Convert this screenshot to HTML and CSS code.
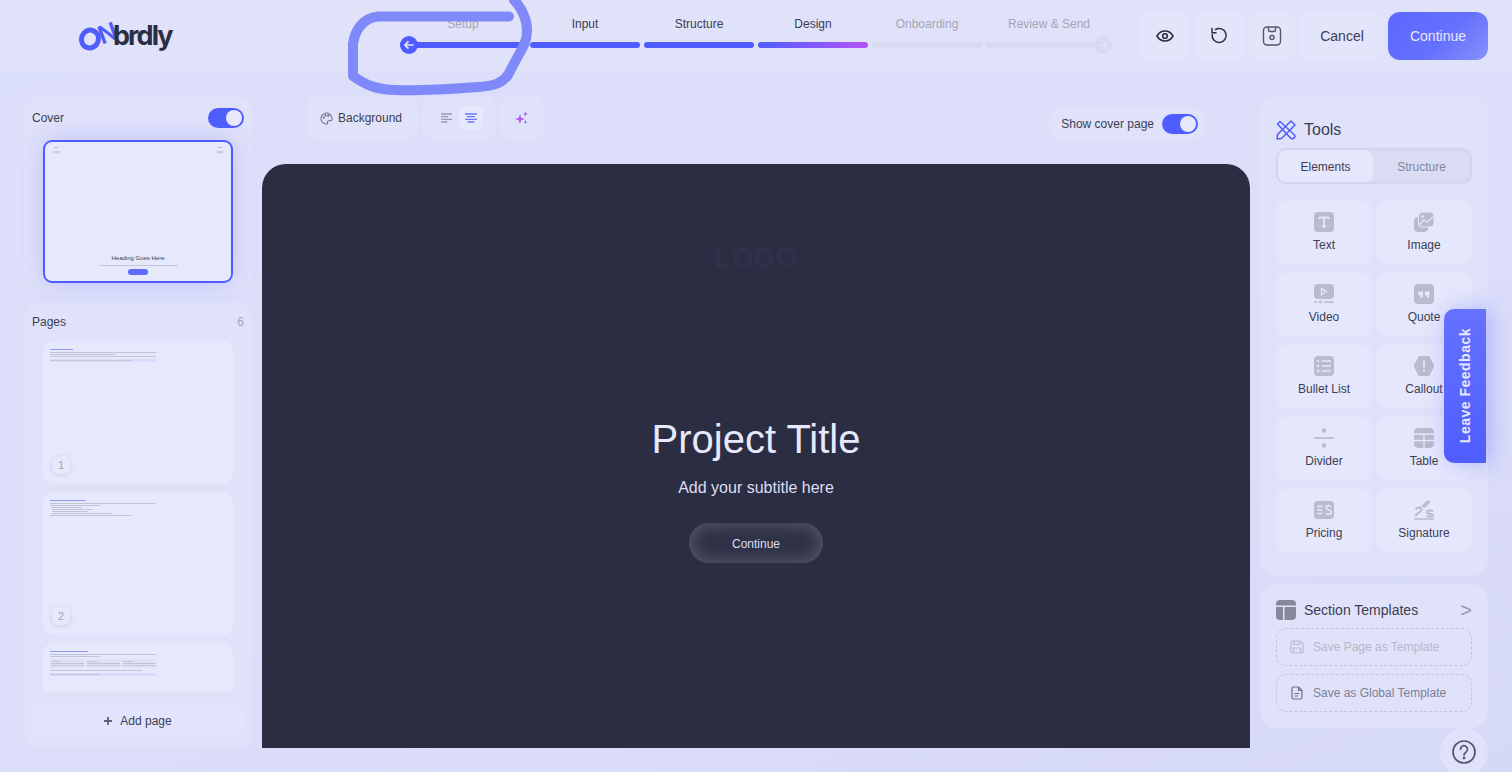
FILE: index.html
```html
<!DOCTYPE html>
<html lang="en">
<head>
  <meta charset="UTF-8">
  <title>Onbrdly - Design</title>
  <link rel="stylesheet" href="styles.css">
</head>
<body>
  <!-- Header -->
  <header class="header">
    <a class="logo" href="#">
      <svg class="logo-o" width="26" height="26" viewBox="0 0 26 26"><ellipse cx="13" cy="13" rx="8.500" ry="9" fill="none" stroke="#4f5dff" stroke-width="5" transform="rotate(20 13 13)"/></svg>
      <span class="logo-n">N</span>
      <span class="logo-text">brdly</span>
    </a>
    <div class="stepper">
      <div class="step step-end">
        <span class="step-label muted">Setup</span>
        <span class="step-bar done"></span>
        <span class="step-dot dot-back">
          <svg width="12" height="12" viewBox="0 0 12 12"><path d="M10.500 6H2M5.500 2.300 1.800 6l3.700 3.700" fill="none" stroke="#e6e8fc" stroke-width="1.700" stroke-linejoin="round"/></svg>
        </span>
      </div>
      <div class="step"><span class="step-label">Input</span><span class="step-bar done"></span></div>
      <div class="step"><span class="step-label">Structure</span><span class="step-bar done"></span></div>
      <div class="step"><span class="step-label">Design</span><span class="step-bar current"></span></div>
      <div class="step"><span class="step-label muted">Onboarding</span><span class="step-bar"></span></div>
      <div class="step step-end">
        <span class="step-label muted">Review &amp; Send</span>
        <span class="step-bar"></span>
        <span class="step-dot dot-next">
          <svg width="12" height="12" viewBox="0 0 12 12"><path d="M1.500 6H10M6.500 2.300 10.200 6 6.500 9.700" fill="none" stroke="#e2e4fa" stroke-width="1.400" stroke-linejoin="round"/></svg>
        </span>
      </div>
    </div>
    <div class="actions">
      <button class="btn-icon">
        <svg width="20" height="20" viewBox="0 0 20 20" fill="none" stroke="#2b2d42" stroke-width="1.600"><path d="M2 10C4 6.400 6.800 5 10 5S16 6.400 18 10C16 13.600 13.200 15 10 15S4 13.600 2 10Z"/><circle cx="10" cy="10" r="2.300"/></svg>
      </button>
      <button class="btn-icon">
        <svg width="20" height="20" viewBox="0 0 20 20" fill="none" stroke="#2b2d42" stroke-width="1.500" stroke-linecap="round" stroke-linejoin="round"><path d="M6.500 3.500A7 7 0 1 1 3.200 8.500"/><path d="M3 2.500V6.700H7"/></svg>
      </button>
      <button class="btn-icon btn-save">
        <svg width="20" height="20" viewBox="0 0 20 20" fill="none" stroke="#55576c" stroke-width="1.400"><rect x="1.500" y="1" width="17" height="18" rx="3.500"/><path d="M6.500 1V4a1.500 1.500 0 0 0 1.500 1.500H12A1.500 1.500 0 0 0 13.500 4V1"/><circle cx="10" cy="11.500" r="2"/></svg>
      </button>
      <button class="btn-cancel">Cancel</button>
      <button class="btn-continue">Continue</button>
    </div>
    <svg class="scribble" width="200" height="110" viewBox="340 0 200 110">
      <path d="M509 16.500H378C363 18 355 30 353 44V76C364 84 376 90 396 90C420 91 450 89 478 87C496 86 503 82 508 75L518 56C524 46 527 40 527 30C527 20 522 8 514 0" fill="none" stroke="#8089fa" stroke-width="10" stroke-linecap="round" stroke-linejoin="round"/>
    </svg>
  </header>

  <main class="main">
    <!-- Left column -->
    <aside class="col-left">
      <section class="panel cover-panel">
        <div class="panel-row">
          <span>Cover</span>
          <span class="toggle"></span>
        </div>
        <div class="cover-thumb">
          <div class="cover-logos">
            <div class="cover-logo"><i></i><span>Logo</span></div>
            <div class="cover-logo"><i></i><span>Logo</span></div>
          </div>
          <div class="cover-heading">Heading Goes Here</div>
          <div class="cover-line"></div>
          <div class="cover-btn"></div>
        </div>
      </section>

      <section class="panel pages-panel">
        <div class="panel-row">
          <span>Pages</span>
          <span class="count">6</span>
        </div>
        <div class="page-list">
          <div class="page-thumb">
            <div class="bar bar-title w-23"></div>
            <div class="bar w-106"></div>
            <div class="bar w-65"></div>
            <div class="bar w-106"></div>
            <div class="bar-note"><div class="bar w-82"></div></div>
            <span class="page-num">1</span>
          </div>
          <div class="page-thumb">
            <div class="bar bar-title w-36"></div>
            <div class="bar w-106"></div>
            <div class="bar w-50"></div>
            <div class="bar bar-indent w-30"></div>
            <div class="bar bar-indent w-40"></div>
            <div class="bar bar-indent w-36"></div>
            <div class="bar bar-indent w-60"></div>
            <div class="bar w-82"></div>
            <span class="page-num">2</span>
          </div>
          <div class="page-thumb">
            <div class="bar bar-title w-38"></div>
            <div class="bar w-106"></div>
            <div class="bar w-50"></div>
            <div class="mini-cols">
              <div class="mini-col"><div class="bar w-10"></div><div class="bar"></div><div class="bar"></div></div>
              <div class="mini-col"><div class="bar w-10"></div><div class="bar"></div><div class="bar"></div></div>
              <div class="mini-col"><div class="bar w-10"></div><div class="bar"></div><div class="bar"></div></div>
            </div>
            <div class="bar w-92"></div>
            <div class="bar-note"><div class="bar w-50"></div></div>
          </div>
        </div>
        <button class="add-page">
          <svg width="10" height="10" viewBox="0 0 10 10"><path d="M5 1v8M1 5h8" stroke="#5f6176" stroke-width="1.800"/></svg>
          Add page
        </button>
      </section>
    </aside>

    <!-- Canvas -->
    <section class="col-center">
      <div class="toolbar">
        <div class="toolbar-left">
          <button class="tool-btn tool-bg">
            <svg width="13" height="13" viewBox="0 0 14 14" fill="none" stroke="#6e7084" stroke-width="1.100"><path d="M7 1a6 6 0 1 0 0 12c1.200 0 1.500-.8 1.200-1.600-.4-1 .2-1.900 1.300-1.900H11.500C12.500 9.500 13 8.600 13 7.300 13 3.700 10.300 1 7 1Z"/><circle cx="4" cy="6" r=".7"/><circle cx="6" cy="3.800" r=".7"/><circle cx="9" cy="4" r=".7"/></svg>
            Background
          </button>
          <div class="tool-btn tool-align">
            <span class="align-opt">
              <svg width="12" height="10" viewBox="0 0 12 10" stroke="#9a9cb0" stroke-width="1.300"><path d="M0 1h11M0 3.700h7M0 6.300h11M0 9h6.500"/></svg>
            </span>
            <span class="align-opt active">
              <svg width="12" height="10" viewBox="0 0 12 10" stroke="#6f78fa" stroke-width="1.300"><path d="M0 1h12M2 3.700h8M0 6.300h12M2.500 9h7"/></svg>
            </span>
          </div>
          <button class="tool-btn tool-magic">
            <svg width="14" height="14" viewBox="0 0 14 14" fill="#b75bf2"><path d="M5 3 6.300 6.700 10 8 6.300 9.300 5 13 3.700 9.300 0 8 3.700 6.700Z"/><path d="M10.500 .5l.7 1.800 1.800.7-1.800.7-.7 1.800-.7-1.800L8 3l1.800-.7Z" fill="#9a6bf7"/><path d="M10.500 9l.6 1.400 1.400.6-1.400.6-.6 1.400-.6-1.400-1.400-.6 1.400-.6Z" fill="#7c6cf9"/></svg>
          </button>
        </div>
        <div class="cover-switch">
          <span>Show cover page</span>
          <span class="toggle"></span>
        </div>
      </div>
      <div class="canvas">
        <div class="canvas-logo">LOGO</div>
        <h1 class="canvas-title">Project Title</h1>
        <p class="canvas-sub">Add your subtitle here</p>
        <button class="canvas-btn">Continue</button>
      </div>
    </section>

    <!-- Right column -->
    <aside class="col-right">
      <section class="panel tools-panel">
        <div class="tools-head">
          <svg width="20" height="20" viewBox="0 0 20 20" fill="none" stroke="#4f5dff" stroke-width="1.500" stroke-linejoin="round"><path d="M15 1 19 5 5.500 18.500 1 19 1.500 14.500Z"/><path d="M1.500 4 4 1.500 18 14.500c1.500 1.500 1 3-.3 3.800-1 .6-2.300.4-3.200-.4Z"/></svg>
          <span>Tools</span>
        </div>
        <div class="tabs">
          <span class="tab active">Elements</span>
          <span class="tab">Structure</span>
        </div>
        <div class="tool-grid">
          <div class="tool-tile">
            <svg width="20" height="20" viewBox="0 0 20 20"><rect width="20" height="20" rx="4" fill="#b9bbcf"/><path d="M5.500 7V5.500h9V7M10 5.500v9M8 14.500h4" fill="none" stroke="#e6e8fc" stroke-width="1.800"/></svg>
            <span>Text</span>
          </div>
          <div class="tool-tile">
            <svg width="20" height="20" viewBox="0 0 20 20"><rect x="0" y="5" width="14" height="15" rx="4" fill="#b9bbcf"/><rect x="4.500" y="0" width="15.500" height="15" rx="4" fill="#b9bbcf" stroke="#e6e8fc"/><circle cx="8.500" cy="4.500" r="1.300" fill="#e6e8fc"/><path d="M5 13l5-5 3 2 6-5" fill="none" stroke="#e6e8fc" stroke-width="1.300"/></svg>
            <span>Image</span>
          </div>
          <div class="tool-tile">
            <svg width="20" height="20" viewBox="0 0 20 20"><rect width="20" height="15" rx="4" fill="#b9bbcf"/><path d="M7.500 4.500v6l5-3Z" fill="none" stroke="#e6e8fc" stroke-width="1.300"/><path d="M0 18h3M10 18h10" stroke="#b9bbcf" stroke-width="1.500"/><circle cx="6.500" cy="18" r="1.500" fill="#b9bbcf"/></svg>
            <span>Video</span>
          </div>
          <div class="tool-tile">
            <svg width="20" height="20" viewBox="0 0 20 20"><rect width="20" height="20" rx="4" fill="#b9bbcf"/><path d="M4.500 7.500h4.500V11c0 1.700-.9 2.800-2.400 3.300L6 13c.6-.3 1-.7 1-1.500H4.500ZM11 7.500h4.500V11c0 1.700-.9 2.800-2.400 3.300L12.500 13c.6-.3 1-.7 1-1.500H11Z" fill="#e6e8fc"/></svg>
            <span>Quote</span>
          </div>
          <div class="tool-tile">
            <svg width="20" height="20" viewBox="0 0 20 20"><rect width="20" height="20" rx="4" fill="#b9bbcf"/><path d="M7.500 5H17M7.500 10H17M7.500 15H17" stroke="#e6e8fc" stroke-width="1.500"/><circle cx="4" cy="5" r="1.300" fill="#e6e8fc"/><circle cx="4" cy="10" r="1.300" fill="#e6e8fc"/><circle cx="4" cy="15" r="1.300" fill="#e6e8fc"/></svg>
            <span>Bullet List</span>
          </div>
          <div class="tool-tile">
            <svg width="20" height="20" viewBox="0 0 20 20"><path d="M6 0h8a2 2 0 0 1 1.600.8L19.500 8a3.500 3.500 0 0 1 0 4l-3.900 7.200A2 2 0 0 1 14 20H6a2 2 0 0 1-1.600-.8L.5 12a3.500 3.500 0 0 1 0-4L4.400 .8A2 2 0 0 1 6 0Z" fill="#b9bbcf"/><path d="M10 4.500v7" stroke="#e6e8fc" stroke-width="1.800"/><circle cx="10" cy="14.500" r="1.100" fill="#e6e8fc"/></svg>
            <span>Callout</span>
          </div>
          <div class="tool-tile">
            <svg width="20" height="20" viewBox="0 0 20 20"><circle cx="10" cy="2.500" r="2.200" fill="#b9bbcf"/><path d="M0 10h20" stroke="#b9bbcf" stroke-width="1.600"/><circle cx="10" cy="17.500" r="2.200" fill="#b9bbcf"/></svg>
            <span>Divider</span>
          </div>
          <div class="tool-tile">
            <svg width="20" height="20" viewBox="0 0 20 20"><rect width="20" height="20" rx="4.500" fill="#b9bbcf"/><path d="M0 6h20M0 12.500h20M10 6v14" stroke="#e6e8fc" stroke-width="1.400"/></svg>
            <span>Table</span>
          </div>
          <div class="tool-tile">
            <svg width="20" height="20" viewBox="0 0 20 20"><rect y="1" width="20" height="18" rx="4" fill="#b9bbcf"/><path d="M3 6.500h5.500M3 10h5.500M3 13.500h5.500" stroke="#e6e8fc" stroke-width="1.500"/><path d="M17 6.800c-.7-.9-1.500-1.200-2.500-1.200-1.300 0-2.300.7-2.300 2 0 2.600 5 1.600 5 4.600 0 1.300-1.100 2.100-2.600 2.100-1.100 0-2-.4-2.700-1.200" fill="none" stroke="#e6e8fc" stroke-width="1.600"/></svg>
            <span>Pricing</span>
          </div>
          <div class="tool-tile">
            <svg width="20" height="20" viewBox="0 0 20 20" fill="none" stroke="#b9bbcf" stroke-width="2"><path d="M0 19h20" stroke-width="1.500"/><path d="M1.500 9.500c1.500-2.500 6-2.800 6 0 0 2-5 4.500-6.500 6.500"/><path d="M19 11.500c-1-1.200-6-1.500-6 .7 0 2.300 6 1.200 6 3.300 0 1.500-3.500 1.300-6.500.5"/><path d="M10 6l4-4" stroke-width="3.500" stroke-linecap="round"/></svg>
            <span>Signature</span>
          </div>
        </div>
      </section>

      <section class="panel templates-panel">
        <div class="templates-head">
          <svg width="20" height="20" viewBox="0 0 20 20"><path d="M4 0h12a4 4 0 0 1 4 4v1.500H0V4a4 4 0 0 1 4-4Z" fill="#85879b"/><path d="M0 7h7v13H4a4 4 0 0 1-4-4ZM8.500 7H20v9a4 4 0 0 1-4 4H8.500Z" fill="#85879b"/></svg>
          <span>Section Templates</span>
          <span class="chev">&gt;</span>
        </div>
        <button class="dash-btn disabled">
          <svg width="14" height="14" viewBox="0 0 14 14" fill="none" stroke="#b9bbcf" stroke-width="1.200" stroke-linejoin="round"><path d="M1 2.500A1.500 1.500 0 0 1 2.500 1H10l3 3v7.500a1.500 1.500 0 0 1-1.500 1.500h-9A1.500 1.500 0 0 1 1 11.500Z"/><path d="M4 1v3.500h5V1M3.500 13V8h7v5"/></svg>
          Save Page as Template
        </button>
        <button class="dash-btn">
          <svg width="14" height="14" viewBox="0 0 14 14" fill="none" stroke="#6e7084" stroke-width="1.200" stroke-linejoin="round"><path d="M2 2.500A1.500 1.500 0 0 1 3.500 1H8.500L12 4.500v7A1.500 1.500 0 0 1 10.500 13h-7A1.500 1.500 0 0 1 2 11.500Z"/><path d="M8.500 1v3.500H12M4.500 7.500h5M4.500 10h3.500"/></svg>
          Save as Global Template
        </button>
      </section>
    </aside>
  </main>

  <button class="feedback">Leave Feedback</button>
  <button class="help">
    <svg width="24" height="24" viewBox="0 0 24 24" fill="none" stroke="#55576c" stroke-width="1.700"><circle cx="12" cy="12" r="11"/><path d="M8.500 9.200a3.500 3.500 0 1 1 5.400 3c-1.300.8-1.900 1.400-1.900 2.800" stroke-linecap="round"/><circle cx="12" cy="18" r=".6" fill="#55576c"/></svg>
  </button>
</body>
</html>
```
FILE: styles.css
```css
/* Global Styles */
:root {
  --primary: #4f5dff;
  --dark: #2b2d42;
  --text: #3c3e54;
  --muted: #a3a5b8;
  --panel: #e0e2f9;
  --tile: #e5e7fc;
  --track: #d8daf1;
}

* {
  margin: 0;
  padding: 0;
  box-sizing: border-box;
}

html, body {
  height: 100%;
}

body {
  position: relative;
  width: 1512px;
  height: 772px;
  overflow: hidden;
  font-family: 'Liberation Sans', Arial, sans-serif;
  color: var(--text);
  background: linear-gradient(160deg, #dcdffa 0%, #dcdefa 55%, #d6d9f6 100%);
}

button {
  font-family: inherit;
  border: none;
  cursor: pointer;
  color: inherit;
}

/* Header */
.header {
  position: relative;
  display: flex;
  align-items: flex-start;
  height: 72px;
  background-color: var(--panel);
}

.logo {
  position: relative;
  display: block;
  width: 400px;
  height: 72px;
  flex-shrink: 0;
  text-decoration: none;
}

.logo-o {
  position: absolute;
  left: 77px;
  top: 26px;
}

.logo-n {
  position: absolute;
  left: 98px;
  top: 19px;
  font-family: 'Inter', sans-serif;
  font-size: 25px;
  line-height: 28px;
  font-weight: 600;
  color: var(--primary);
  transform: rotate(-20deg);
}

.logo-text {
  position: absolute;
  left: 113px;
  top: 20px;
  font-family: 'Inter', sans-serif;
  font-size: 27px;
  line-height: 32px;
  font-weight: 700;
  letter-spacing: -1.900px;
  color: var(--dark);
}

.stepper {
  display: flex;
  gap: 4px;
  margin-top: 16px;
}

.step {
  position: relative;
  display: flex;
  flex-direction: column;
  align-items: center;
  width: 110px;
  gap: 10px;
}

.step-end {
  width: 126px;
}

.step-label {
  font-size: 12px;
  line-height: 16px;
  color: var(--text);
}

.step-label.muted {
  color: var(--muted);
}

.step-bar {
  display: block;
  width: 100%;
  height: 6px;
  border-radius: 3px;
  background-color: var(--track);
}

.step-bar.done {
  background-color: var(--primary);
}

.step-bar.current {
  background: linear-gradient(90deg, var(--primary), #b455f5);
}

.step-dot {
  position: absolute;
  top: 20px;
  width: 18px;
  height: 18px;
  border-radius: 50%;
  display: flex;
  align-items: center;
  justify-content: center;
}

.dot-back {
  left: 0;
  background-color: var(--primary);
}

.dot-next {
  right: 0;
  background-color: var(--track);
}

.actions {
  display: flex;
  gap: 4px;
  margin: 12px 24px 0 auto;
}

.btn-icon,
.btn-cancel {
  height: 48px;
  border-radius: 12px;
  background-color: #e3e5fb;
  display: flex;
  align-items: center;
  justify-content: center;
}

.btn-icon {
  width: 50px;
}

.btn-save {
  width: 48px;
}

.btn-cancel {
  width: 84px;
  font-size: 14px;
  color: var(--text);
}

.btn-continue {
  width: 100px;
  height: 48px;
  border-radius: 12px;
  font-size: 14px;
  color: #e6e8fc;
  background: linear-gradient(135deg, #5c68ff 0%, #6470fd 55%, #8791fb 100%);
}

.scribble {
  position: absolute;
  left: 340px;
  top: 0;
  overflow: visible;
}

/* Layout */
.main {
  display: grid;
  grid-template-columns: 228px 988px 228px;
  column-gap: 10px;
  height: 700px;
  padding: 24px;
}

.panel {
  background-color: var(--panel);
  border-radius: 16px;
}

.panel-row {
  display: flex;
  align-items: center;
  justify-content: space-between;
  font-size: 12px;
  line-height: 20px;
}

/* Left column */
.col-left {
  display: flex;
  flex-direction: column;
  gap: 8px;
}

.cover-panel {
  height: 199px;
  padding: 12px 8px;
}

.toggle {
  position: relative;
  display: block;
  width: 36px;
  height: 20px;
  border-radius: 10px;
  background-color: var(--primary);
}

.toggle::after {
  content: '';
  position: absolute;
  top: 2px;
  right: 2px;
  width: 16px;
  height: 16px;
  border-radius: 50%;
  background-color: #e6e8fc;
}

.cover-thumb {
  display: flex;
  flex-direction: column;
  align-items: center;
  width: 190px;
  height: 143px;
  margin: 12px 0 0 11px;
  padding: 5px 8px 6px;
  border: 2px solid var(--primary);
  border-radius: 9px;
  background-color: #e6e8fc;
  box-shadow: 0 0 24px rgba(79, 93, 255, 0.24);
}

.cover-logos {
  display: flex;
  justify-content: space-between;
  width: 100%;
  flex: 1;
}

.cover-logo {
  display: flex;
  flex-direction: column;
  align-items: center;
  gap: 2px;
  font-size: 3px;
  line-height: 4px;
  color: var(--muted);
}

.cover-logo i {
  display: block;
  width: 4px;
  height: 1px;
  background-color: #b5b7ca;
}

.cover-heading {
  font-size: 6px;
  line-height: 8px;
  color: var(--text);
}

.cover-line {
  width: 79px;
  height: 1px;
  margin-top: 3px;
  background-color: #c3c5da;
}

.cover-btn {
  width: 20px;
  height: 6px;
  margin-top: 3px;
  border-radius: 3px;
  background-color: #5f6bfb;
}

.pages-panel {
  display: flex;
  flex-direction: column;
  height: 445px;
  padding: 9px 8px 11px;
}

.count {
  color: var(--muted);
}

.page-list {
  display: flex;
  flex-direction: column;
  gap: 8px;
  height: 351px;
  margin-top: 9px;
  padding-left: 11px;
  overflow: hidden;
}

.page-thumb {
  position: relative;
  flex-shrink: 0;
  display: flex;
  flex-direction: column;
  align-items: flex-start;
  gap: 1px;
  width: 190px;
  height: 143px;
  padding: 8px 7px;
  border-radius: 10px;
  background-color: #e6e8fc;
}

.bar {
  width: 100%;
  height: 1px;
  background-color: #c2c4d8;
}

.bar-title {
  margin-bottom: 1px;
  background-color: #9398f2;
}

.bar-indent {
  margin-left: 2px;
}

.bar-note {
  width: 107px;
  margin-top: 1px;
  padding: 1px 0;
  background-color: #d9dcfb;
}

.w-10 { width: 10px; }
.w-23 { width: 23px; }
.w-30 { width: 30px; }
.w-36 { width: 36px; }
.w-38 { width: 38px; }
.w-40 { width: 40px; }
.w-50 { width: 50px; }
.w-60 { width: 60px; }
.w-65 { width: 65px; }
.w-82 { width: 82px; }
.w-92 { width: 92px; }
.w-106 { width: 106px; }

.mini-cols {
  display: flex;
  gap: 1px;
  width: 107px;
  margin: 1px 0;
}

.mini-col {
  flex: 1;
  display: flex;
  flex-direction: column;
  gap: 1px;
  padding: 2px 1px;
  background-color: #dfe1f8;
}

.page-num {
  position: absolute;
  left: 9px;
  bottom: 10px;
  width: 18px;
  height: 18px;
  border-radius: 6px;
  background-color: #e6e8fc;
  box-shadow: 0 1px 4px rgba(120, 125, 180, 0.25);
  font-size: 11px;
  line-height: 18px;
  text-align: center;
  color: var(--muted);
}

.add-page {
  display: flex;
  align-items: center;
  justify-content: center;
  gap: 7px;
  height: 33px;
  margin-top: 12px;
  padding-right: 1px;
  border-radius: 10px;
  font-size: 12px;
  color: var(--text);
  background-color: #e2e3fd;
}

/* Canvas */
.col-center {
  display: flex;
  flex-direction: column;
  min-width: 0;
}

.toolbar {
  display: flex;
  justify-content: space-between;
  align-items: flex-start;
  height: 68px;
  padding: 0 44px;
}

.toolbar-left {
  display: flex;
  gap: 4px;
}

.tool-btn {
  display: flex;
  align-items: center;
  justify-content: center;
  height: 44px;
  border-radius: 12px;
  background-color: var(--panel);
}

.tool-bg {
  justify-content: flex-start;
  gap: 5px;
  width: 112px;
  padding-left: 14px;
  font-size: 12px;
  color: var(--text);
}

.tool-align {
  width: 74px;
}

.align-opt {
  display: flex;
  align-items: center;
  justify-content: center;
  width: 24px;
  height: 24px;
  border-radius: 6px;
}

.align-opt.active {
  background-color: #e6e8fc;
}

.tool-magic {
  width: 44px;
}

.cover-switch {
  display: flex;
  align-items: center;
  gap: 8px;
  height: 32px;
  margin-top: 12px;
  padding: 0 8px 0 12px;
  border-radius: 12px;
  font-size: 12px;
  background-color: var(--panel);
}

.canvas {
  display: flex;
  flex-direction: column;
  align-items: center;
  height: 584px;
  padding-top: 78px;
  border-radius: 24px 24px 0 0;
  background-color: var(--dark);
}

.canvas-logo {
  font-size: 28px;
  line-height: 32px;
  font-weight: 700;
  color: #30324a;
}

.canvas-title {
  margin-top: 140px;
  font-size: 40px;
  line-height: 50px;
  font-weight: 400;
  color: #e6e8fc;
}

.canvas-sub {
  margin-top: 12px;
  font-size: 16px;
  line-height: 24px;
  color: #dcdef5;
}

.canvas-btn {
  width: 134px;
  height: 40px;
  margin-top: 23px;
  padding-top: 2px;
  border-radius: 20px;
  font-size: 12px;
  color: #dcdef5;
  background-color: #2f3146;
  box-shadow: inset 0 0 18px #5e6076;
}

/* Right column */
.col-right {
  display: flex;
  flex-direction: column;
  gap: 8px;
}

.tools-panel {
  height: 480px;
  padding: 24px 16px;
}

.tools-head {
  display: flex;
  align-items: center;
  gap: 8px;
  height: 20px;
  font-size: 16px;
}

.tabs {
  display: flex;
  height: 36px;
  margin-top: 8px;
  padding: 2px;
  border-radius: 10px;
  background-color: #d9dcf3;
  box-shadow: inset 0 0 4px rgba(150, 155, 200, 0.3);
}

.tab {
  flex: 1;
  padding-top: 1px;
  font-size: 12px;
  line-height: 32px;
  text-align: center;
  color: #85879b;
}

.tab.active {
  flex: none;
  width: 95px;
  border-radius: 8px;
  color: var(--text);
  background-color: var(--tile);
}

.tool-grid {
  display: grid;
  grid-template-columns: 1fr 1fr;
  gap: 8px 4px;
  margin-top: 16px;
}

.tool-tile {
  display: flex;
  flex-direction: column;
  align-items: center;
  gap: 5px;
  height: 64px;
  padding-top: 12px;
  border-radius: 12px;
  font-size: 12px;
  line-height: 16px;
  background-color: var(--tile);
}

.templates-panel {
  display: flex;
  flex-direction: column;
  gap: 8px;
  height: 144px;
  padding: 16px;
}

.templates-head {
  display: flex;
  align-items: center;
  gap: 8px;
  height: 20px;
  font-size: 14px;
}

.chev {
  margin-left: auto;
  font-size: 20px;
  color: #9597ab;
}

.dash-btn {
  display: flex;
  align-items: center;
  gap: 9px;
  height: 38px;
  padding-left: 13px;
  border: 1px dashed #c3c5da;
  border-radius: 10px;
  font-size: 12px;
  color: #7d7f93;
  background: transparent;
}

.dash-btn.disabled {
  color: #b5b7ca;
}

/* Floating */
.feedback {
  position: absolute;
  left: 1444px;
  top: 309px;
  width: 42px;
  height: 154px;
  display: flex;
  align-items: center;
  justify-content: center;
  border-radius: 10px 0 0 10px;
  writing-mode: sideways-lr;
  font-size: 14px;
  font-weight: 700;
  letter-spacing: 0.5px;
  color: #e6e8fc;
  background: linear-gradient(180deg, #6671ff, #4f5dff);
  box-shadow: 4px 0 22px rgba(79, 93, 255, 0.35);
}

.help {
  position: absolute;
  left: 1440px;
  top: 728px;
  width: 48px;
  height: 48px;
  display: flex;
  align-items: center;
  justify-content: center;
  border-radius: 50%;
  background-color: var(--panel);
}
```
